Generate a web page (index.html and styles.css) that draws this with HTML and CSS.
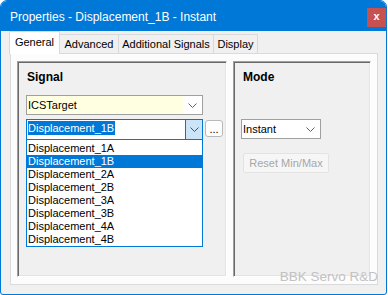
FILE: index.html
```html
<!DOCTYPE html>
<html lang="en">
<head>
    <meta charset="UTF-8">
    <title>Properties - Displacement_1B - Instant</title>
    <link rel="stylesheet" href="styles.css">
</head>
<body>
<div class="window">
    <!-- Title bar -->
    <div class="titlebar">
        <span class="title">Properties - Displacement_1B - Instant</span>
        <span class="close">x</span>
    </div>

    <div class="client">
        <!-- Tabs -->
        <div class="tabs">
            <div class="tab active tab-general">General</div>
            <div class="tab tab-advanced">Advanced</div>
            <div class="tab tab-additional">Additional Signals</div>
            <div class="tab tab-display">Display</div>
        </div>

        <div class="page">
            <!-- Signal group -->
            <div class="group signal">
                <div class="group-title">Signal</div>

                <div class="combo combo-target">
                    <div class="value yellow">ICSTarget</div>
                    <div class="arrow">
                        <svg width="9" height="5" viewBox="0 0 9 5"><polyline points="0.5,0.5 4.5,4.5 8.5,0.5" fill="none" stroke="#606060" stroke-width="1"/></svg>
                    </div>
                </div>

                <div class="signal-row">
                    <div class="combo combo-signal open">
                        <div class="value"><span class="sel">Displacement_1B</span></div>
                        <div class="arrow pressed">
                            <svg width="9" height="5" viewBox="0 0 9 5"><polyline points="0.5,0.5 4.5,4.5 8.5,0.5" fill="none" stroke="#505050" stroke-width="1"/></svg>
                        </div>
                        <ul class="droplist">
                            <li>Displacement_1A</li>
                            <li class="selected">Displacement_1B</li>
                            <li>Displacement_2A</li>
                            <li>Displacement_2B</li>
                            <li>Displacement_3A</li>
                            <li>Displacement_3B</li>
                            <li>Displacement_4A</li>
                            <li>Displacement_4B</li>
                        </ul>
                    </div>
                    <button class="more">...</button>
                </div>
            </div>

            <!-- Mode group -->
            <div class="group mode">
                <div class="group-title">Mode</div>

                <div class="combo combo-mode">
                    <div class="value">Instant</div>
                    <div class="arrow">
                        <svg width="9" height="5" viewBox="0 0 9 5"><polyline points="0.5,0.5 4.5,4.5 8.5,0.5" fill="none" stroke="#606060" stroke-width="1"/></svg>
                    </div>
                </div>

                <button class="reset" disabled>Reset Min/Max</button>
            </div>
        </div>
    </div>

    <div class="brand">BBK Servo R&amp;D</div>
</div>
</body>
</html>
```

FILE: styles.css
```css
body {
    margin: 0;
    background: #ffffff;
    font-family: "Liberation Sans", Arial, sans-serif;
}

.window {
    position: relative;
    width: 387px;
    height: 295px;
    box-sizing: border-box;
    border: 1px solid #0078d7;
    border-radius: 7px 7px 3px 3px;
    background: #f0f0f0;
    overflow: hidden;
}

/* Title bar */
.titlebar {
    display: flex;
    align-items: flex-start;
    height: 30px;
    background: #0078d7;
    color: #ffffff;
}

.title {
    margin: 9px 0 0 9px;
    font-size: 12px;
    line-height: 14px;
}

.close {
    margin: 7px 0 0 auto;
    width: 19px;
    height: 19px;
    background: #c75050;
    font-size: 11px;
    font-weight: bold;
    line-height: 17px;
    text-align: center;
}

/* Tabs */
.client {
    padding-left: 9px;
}

.tabs {
    display: flex;
    align-items: flex-end;
    height: 22px;
}

.tab {
    position: relative;
    height: 19px;
    box-sizing: border-box;
    margin-left: -1px;
    padding-top: 3px;
    border: 1px solid #d9d9d9;
    border-bottom: none;
    background: #f0f0f0;
    font-size: 11px;
    line-height: 13px;
    text-align: center;
    color: #000;
}

.tab.active {
    z-index: 2;
    height: 23px;
    margin-bottom: -1px;
    padding-top: 4px;
    background: #ffffff;
}

.tab-general { width: 51px; }
.tab-advanced { width: 60px; }
.tab-additional { width: 96px; }
.tab-display { width: 45px; }

.page {
    display: flex;
    gap: 6px;
    align-items: flex-start;
    width: 368px;
    height: 232px;
    box-sizing: border-box;
    padding: 7px 0 0 6px;
    border: 1px solid #dadada;
    background: #fcfcfc;
}

/* Group panels (sunken) */
.group {
    position: relative;
    height: 216px;
    box-sizing: border-box;
    padding: 8px 0 0 9px;
    border: 1px solid;
    border-color: #a0a0a0 #ffffff #ffffff #a0a0a0;
    box-shadow: inset 1px 1px #696969, inset -1px -1px #e3e3e3;
    background: #f0f0f0;
}

.signal { width: 210px; }
.mode { width: 138px; }

.group-title {
    font-size: 12px;
    font-weight: bold;
    line-height: 14px;
}

/* Combo boxes */
.combo {
    position: relative;
    display: flex;
    box-sizing: border-box;
    height: 20px;
    border: 1px solid #a0a0a0;
    background: #ffffff;
    font-size: 11px;
}

.combo .value {
    flex: 1;
    padding-left: 1px;
    line-height: 18px;
    white-space: nowrap;
}

.combo .value.yellow {
    background: #ffffe1;
}

.combo .arrow {
    display: flex;
    align-items: center;
    justify-content: center;
    width: 19px;
}

.combo-target {
    width: 177px;
    margin: 11px 0 0 -1px;
}

.signal-row {
    display: flex;
    align-items: flex-start;
    gap: 2px;
    margin: 4px 0 0 -1px;
}

.combo-signal {
    width: 177px;
    height: 21px;
    border-color: #0078d7;
    z-index: 3;
}

.combo-signal .value {
    line-height: 14px;
}

.sel {
    display: inline-block;
    margin-top: 1px;
    padding-right: 1px;
    background: #0078d7;
    color: #ffffff;
}

.combo-signal .arrow.pressed {
    width: 16px;
    border-left: 1px solid #0078d7;
    background: #cce4f7;
}

.droplist {
    position: absolute;
    top: 100%;
    left: -1px;
    width: 177px;
    box-sizing: border-box;
    margin: 0;
    padding: 2px 0 0;
    border: 1px solid #0078d7;
    background: #ffffff;
    list-style: none;
}

.droplist li {
    height: 13px;
    padding-left: 1px;
    font-size: 11px;
    line-height: 13px;
}

.droplist li.selected {
    background: #0078d7;
    color: #ffffff;
}

.more {
    width: 18px;
    height: 17px;
    margin-top: 1px;
    padding: 0;
    border: 1px solid #b9b9b9;
    border-radius: 3px;
    background: #fdfdfd;
    font-family: inherit;
    font-size: 11px;
    line-height: 12px;
    color: #000;
}

.combo-mode {
    width: 80px;
    margin: 35px 0 0 -2px;
}

.reset {
    display: block;
    width: 86px;
    height: 20px;
    margin-top: 14px;
    padding: 0;
    border: 1px solid #e3e3e3;
    border-radius: 2px;
    background: #f6f6f6;
    font-family: inherit;
    font-size: 11px;
    color: #a6a6a6;
}

/* Watermark over the page corner */
.brand {
    position: absolute;
    top: 268px;
    right: 8px;
    font-size: 13.5px;
    line-height: 16px;
    color: #c2c2c2;
}
```
